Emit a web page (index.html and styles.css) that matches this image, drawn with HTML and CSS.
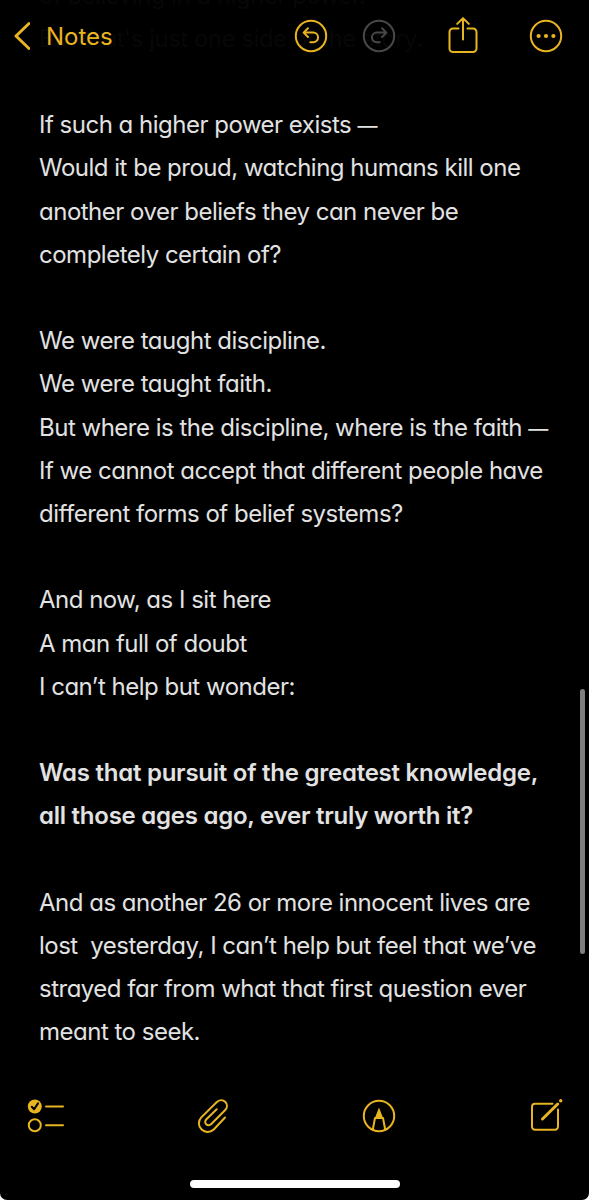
FILE: index.html
```html
<!DOCTYPE html>
<html lang="en">
<head>
    <meta charset="UTF-8">
    <meta name="viewport" content="width=device-width, initial-scale=1.0">
    <title>Notes</title>
    <link rel="stylesheet" href="styles.css">
</head>
<body>
    <div class="phone">
        <header class="topbar">
            <a class="back">
                <svg width="18" height="30" viewBox="0 0 18 30"><path d="M17 2.5 4 15 17 27.5"/></svg>
                <span>Notes</span>
            </a>
            <div class="actions">
                <svg class="icon" width="34" height="34" viewBox="0 0 34 34">
                    <circle cx="17" cy="17" r="15.2"/>
                    <path d="M14 9.2 9.6 13.6 14 18M10 13.6h9.2a4.8 4.8 0 0 1 0 9.7H16.3"/>
                </svg>
                <svg class="icon redo" width="34" height="34" viewBox="0 0 34 34">
                    <circle cx="17" cy="17" r="15.2"/>
                    <path d="M20 9.2 24.4 13.6 20 18M24 13.6h-9.2a4.8 4.8 0 0 0 0 9.7H17.7"/>
                </svg>
                <svg class="icon share" width="30" height="38" viewBox="0 0 30 38">
                    <path d="M10.5 11.4H5a3.500 3.500 0 0 0-3.500 3.500V31.500a3.500 3.500 0 0 0 3.500 3.500h20a3.500 3.500 0 0 0 3.500-3.500V14.900a3.500 3.500 0 0 0-3.500-3.500h-5.500M15 22.500V1.500M9.200 6.900 15 1.100l5.800 5.800"/>
                </svg>
                <svg class="icon" width="34" height="34" viewBox="0 0 34 34">
                    <circle cx="17" cy="17" r="15.2"/>
                    <g class="solid"><circle cx="9.600" cy="17" r="2.100"/><circle cx="17" cy="17" r="2.100"/><circle cx="24.400" cy="17" r="2.100"/></g>
                </svg>
            </div>
        </header>

        <main class="note">
            <div class="faded">
                <p>of believing in a higher power.</p>
                <p>But that's just one side of the story.</p>
            </div>
            <div class="verse">
                <p>If such a higher power exists <span class="dash">—</span></p>
                <p>Would it be proud, watching humans kill one</p>
                <p>another over beliefs they can never be</p>
                <p>completely certain of?</p>
            </div>
            <div class="verse">
                <p>We were taught discipline.</p>
                <p>We were taught faith.</p>
                <p>But where is the discipline, where is the faith <span class="dash">—</span></p>
                <p>If we cannot accept that different people have</p>
                <p>different forms of belief systems?</p>
            </div>
            <div class="verse">
                <p>And now, as I sit here</p>
                <p>A man full of doubt</p>
                <p>I can’t help but wonder:</p>
            </div>
            <div class="verse strong">
                <p>Was that pursuit of the greatest knowledge,</p>
                <p>all those ages ago, ever truly worth it?</p>
            </div>
            <div class="verse">
                <p>And as another 26 or more innocent lives are</p>
                <p>lost&nbsp; yesterday, I can’t help but feel that we’ve</p>
                <p>strayed far from what that first question ever</p>
                <p>meant to seek.</p>
            </div>
        </main>
        <div class="scrollbar"></div>

        <footer class="bottombar">
            <svg class="icon" width="38" height="36" viewBox="0 0 38 36">
                <circle class="solid" cx="7.800" cy="8.500" r="7"/>
                <path class="check" d="M4.800 8.800 7.100 11.300 11 5.400"/>
                <circle cx="7.800" cy="27.200" r="6"/>
                <path d="M19 8.500H36M19 27.200H36"/>
            </svg>
            <svg class="icon" width="34" height="36" viewBox="0 0 34 36">
                <path d="M29 19.500 18 31.200C14.500 34.700 9.300 35 5.600 31.600C2 28.200 2 22.800 5.300 19.400L20.600 4.200C23.200 1.600 26.800 1.500 29.200 3.800C31.700 6.300 31.500 9.700 29 12.300L15.300 26C13.700 27.600 11.600 27.700 10.200 26.300C8.700 24.900 8.900 22.900 10.400 21.300L20.700 11.200"/>
            </svg>
            <svg class="icon marker" width="34" height="36" viewBox="0 0 34 36">
                <circle cx="17" cy="18" r="15.200"/>
                <path class="solid" d="M17 9.500 12.700 20.500h8.600z"/>
                <path d="M10.800 31.500 13 20h8L23.200 31.500"/>
            </svg>
            <svg class="icon" width="34" height="36" viewBox="0 0 34 36">
                <path d="M23.500 5.700H6a3 3 0 0 0-3 3V28.700a3 3 0 0 0 3 3h20a3 3 0 0 0 3-3V11.500"/>
                <path class="pencil" d="M13.500 21 28.700 6"/>
                <circle class="solid" cx="31.700" cy="2.800" r="1.700"/>
            </svg>
        </footer>
        <div class="home"></div>
    </div>
</body>
</html>
```
FILE: styles.css
```css
* {
    margin: 0;
    padding: 0;
    box-sizing: border-box;
}

body {
    background-color: #fff;
    font-family: Inter, "Liberation Sans", sans-serif;
}

.phone {
    position: relative;
    display: flex;
    flex-direction: column;
    height: 1200px;
    overflow: hidden;
    background-color: #000;
    border-radius: 0 0 7px 7px;
}

svg {
    display: block;
    fill: none;
    stroke: #e8b422;
    stroke-width: 2;
    stroke-linecap: round;
    stroke-linejoin: round;
}

.topbar {
    position: relative;
    z-index: 1;
    display: flex;
    justify-content: space-between;
    height: 72px;
    padding: 0 26px 0 12px;
}

.back {
    display: flex;
    align-items: center;
    gap: 16px;
    color: #e8b422;
    font-size: 24px;
}

.back svg {
    stroke-width: 3;
}

.actions {
    display: flex;
    align-items: center;
}

.redo {
    margin-left: 34px;
    stroke: #48484a;
}

.share {
    margin: 0 51px 0 52px;
}

.solid {
    fill: #e8b422;
    stroke: none;
}

.note {
    height: 1004px;
    margin-top: -98.5px;
    padding-left: 39px;
    color: #e2e2e2;
    font-size: 24px;
    line-height: 43.2px;
    letter-spacing: -0.5px;
    font-feature-settings: "cv11";
    white-space: nowrap;
}

.faded {
    color: #070707;
}

.verse {
    margin-top: 43.2px;
}

.strong {
    font-weight: 600;
    letter-spacing: -0.25px;
}

.dash {
    font-size: 20px;
    line-height: 0;
}

.scrollbar {
    position: absolute;
    top: 689px;
    right: 4px;
    width: 5px;
    height: 265px;
    border-radius: 3px;
    background-color: #7f7f7f;
}

.bottombar {
    display: flex;
    justify-content: space-between;
    margin-top: 120.5px;
    padding: 0 26px 0 27px;
}

.check {
    stroke: #000;
}

.marker {
    margin-right: 2px;
}

.pencil {
    stroke-width: 3;
}

.home {
    width: 210px;
    height: 8px;
    margin: 46px auto 0;
    border-radius: 4px;
    background-color: #fff;
}
```
